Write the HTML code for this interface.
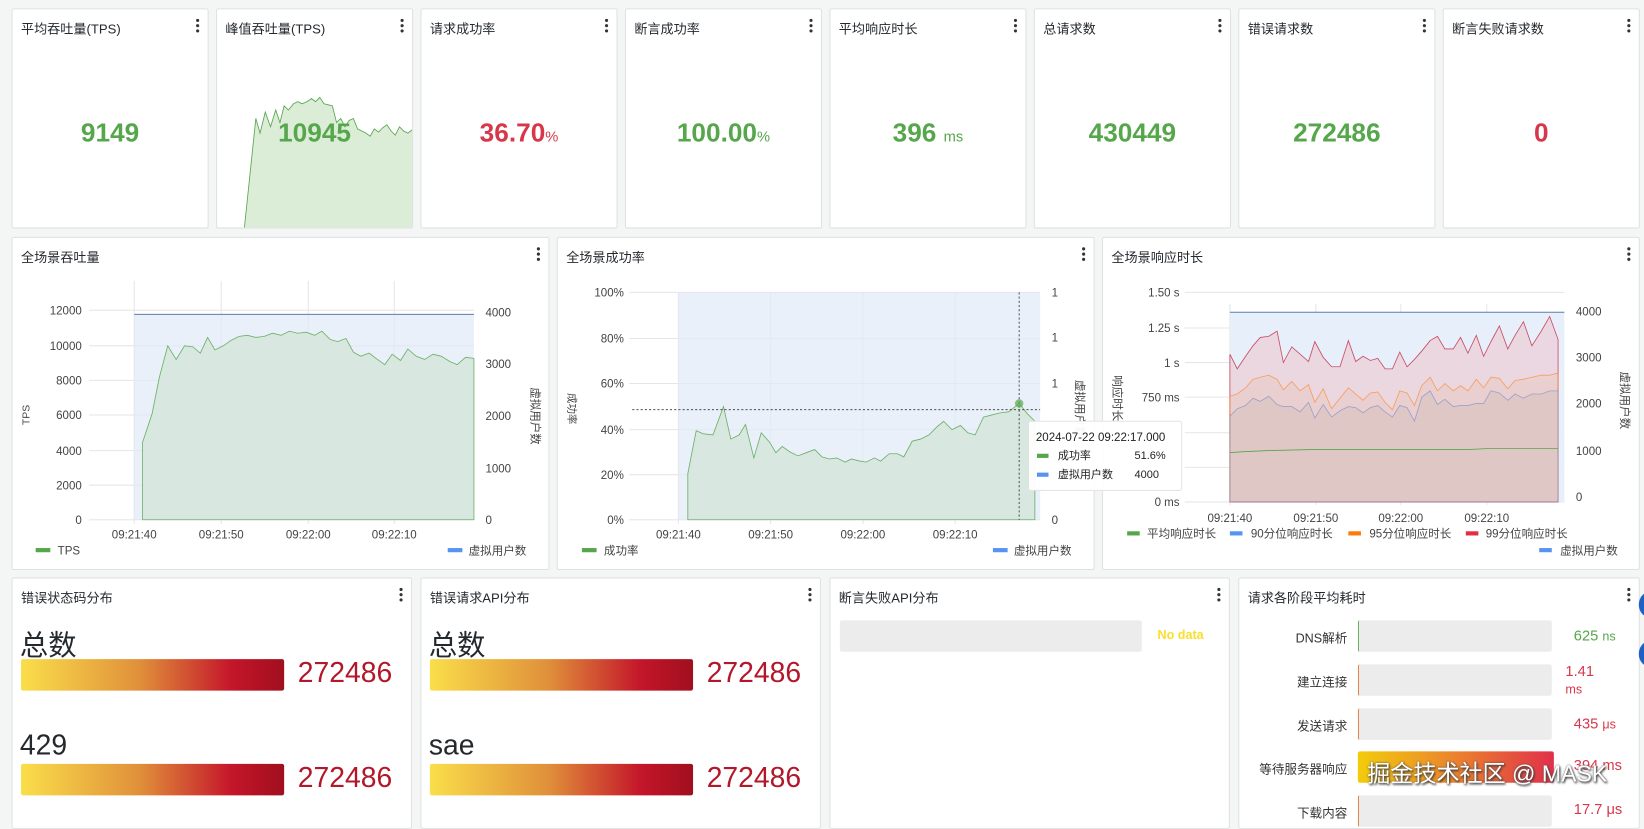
<!DOCTYPE html>
<html><head><meta charset="utf-8">
<style>
html,body{margin:0;padding:0;width:1644px;height:809px;overflow:hidden;background:#f4f5f5;}
#w{position:absolute;left:0;top:0;width:1568px;height:772px;transform:scale(1.0485,1.0479);transform-origin:0 0;font-family:"Liberation Sans","Noto Sans CJK SC",sans-serif;color:#24292e;}
.p{position:absolute;background:#fff;border:1px solid #dfe1e4;border-radius:2px;box-sizing:border-box;overflow:hidden;}
.t{position:absolute;left:8px;top:8px;font-size:12.5px;color:#24292e;}
.k{position:absolute;right:8px;top:9px;width:3px;}
.k i{display:block;width:3px;height:3px;border-radius:50%;background:#333;margin-bottom:2px;}
.big{position:absolute;left:0;right:0;top:104px;text-align:center;font-size:25px;font-weight:bold;}
.g{color:#56a64b}.r{color:#d8374a}
.big small{font-size:14px;font-weight:normal}
svg text{font-family:"Liberation Sans","Noto Sans CJK SC",sans-serif;}
.lab{position:absolute;font-size:12px;color:#333;text-align:right;width:100px;}
.bar{position:absolute;background:#ececec;border-radius:2px;}
.val{position:absolute;font-size:14px;}
.num{position:absolute;left:272px;font-size:27px;color:#b2172a}
</style></head><body><div id="w">
<!-- row 1 -->
<div class="p" style="left:11px;top:8px;width:188px;height:210px"><div class="t">平均吞吐量(TPS)</div><div class="k"><i></i><i></i><i></i></div><div class="big g">9149</div></div>
<div class="p" style="left:206px;top:8px;width:188px;height:210px">
<svg width="188" height="210" style="position:absolute;left:0;top:0"><path d="M26 209 L37 104 L41 118 L46 98 L51 112 L56 96 L60 108 L64 92 L68 96 L73 90 L77 88 L81 90 L86 88 L90 85 L94 88 L98 84 L102 90 L106 91 L110 92 L114 108 L118 104 L122 112 L126 106 L130 104 L134 114 L138 116 L142 118 L146 121 L150 114 L154 117 L158 113 L162 110 L166 116 L170 120 L174 112 L178 116 L182 118 L186 115 L188 115 L188 209Z" fill="#dbecd7" stroke="#56a64b" stroke-width="0.8"/></svg>
<div class="t">峰值吞吐量(TPS)</div><div class="k"><i></i><i></i><i></i></div><div class="big g">10945</div></div>
<div class="p" style="left:401px;top:8px;width:188px;height:210px"><div class="t">请求成功率</div><div class="k"><i></i><i></i><i></i></div><div class="big r">36.70<small>%</small></div></div>
<div class="p" style="left:596px;top:8px;width:188px;height:210px"><div class="t">断言成功率</div><div class="k"><i></i><i></i><i></i></div><div class="big g">100.00<small>%</small></div></div>
<div class="p" style="left:791px;top:8px;width:188px;height:210px"><div class="t">平均响应时长</div><div class="k"><i></i><i></i><i></i></div><div class="big g">396 <small>ms</small></div></div>
<div class="p" style="left:986px;top:8px;width:188px;height:210px"><div class="t">总请求数</div><div class="k"><i></i><i></i><i></i></div><div class="big g">430449</div></div>
<div class="p" style="left:1181px;top:8px;width:188px;height:210px"><div class="t">错误请求数</div><div class="k"><i></i><i></i><i></i></div><div class="big g">272486</div></div>
<div class="p" style="left:1376px;top:8px;width:188px;height:210px"><div class="t">断言失败请求数</div><div class="k"><i></i><i></i><i></i></div><div class="big r">0</div></div>

<!-- row 2 -->
<div class="p" style="left:11px;top:226px;width:513px;height:318px"><div class="t">全场景吞吐量</div><div class="k"><i></i><i></i><i></i></div></div>
<div class="p" style="left:531px;top:226px;width:513px;height:318px"><div class="t">全场景成功率</div><div class="k"><i></i><i></i><i></i></div></div>
<div class="p" style="left:1051px;top:226px;width:513px;height:318px"><div class="t">全场景响应时长</div><div class="k"><i></i><i></i><i></i></div></div>

<svg width="1568" height="560" style="position:absolute;left:0;top:0" font-size="11" fill="#444">
<!-- chart1 -->
<g stroke="#e6e6e6" stroke-width="1">
<line x1="85" y1="296" x2="452" y2="296"/><line x1="85" y1="330" x2="452" y2="330"/><line x1="85" y1="363" x2="452" y2="363"/><line x1="85" y1="396" x2="452" y2="396"/><line x1="85" y1="430" x2="452" y2="430"/><line x1="85" y1="463" x2="452" y2="463"/><line x1="85" y1="496" x2="452" y2="496"/>
<line x1="128" y1="268" x2="128" y2="500"/><line x1="211" y1="268" x2="211" y2="500"/><line x1="294" y1="268" x2="294" y2="500"/><line x1="376" y1="268" x2="376" y2="500"/>
</g>
<rect x="128" y="300" width="324" height="196" fill="#dfeaf8" opacity="0.7"/>
<line x1="128" y1="300" x2="452" y2="300" stroke="#5b7ea8" stroke-width="1"/>
<path d="M136 422 L145 395 L152 360 L160 330 L168 343 L176 330 L184 331 L191 337 L198 322 L205 334 L213 330 L220 325 L228 321 L236 320 L244 322 L252 321 L260 318 L268 320 L276 316 L284 318 L292 317 L300 320 L307 316 L315 324 L322 326 L330 323 L337 336 L344 340 L352 337 L360 343 L367 348 L374 338 L382 344 L389 333 L397 340 L405 343 L413 338 L421 340 L429 345 L436 348 L444 341 L452 342 L452 496 L136 496Z" fill="#d6e7dc" opacity="0.85" stroke="#56a64b" stroke-width="0.8"/>
<g text-anchor="end"><text x="78" y="300">12000</text><text x="78" y="334">10000</text><text x="78" y="367">8000</text><text x="78" y="400">6000</text><text x="78" y="434">4000</text><text x="78" y="467">2000</text><text x="78" y="500">0</text></g>
<text x="463" y="302">4000</text><text x="463" y="351">3000</text><text x="463" y="401">2000</text><text x="463" y="451">1000</text><text x="463" y="500">0</text>
<g text-anchor="middle"><text x="128" y="514">09:21:40</text><text x="211" y="514">09:21:50</text><text x="294" y="514">09:22:00</text><text x="376" y="514">09:22:10</text></g>
<text transform="translate(28,396) rotate(-90)" text-anchor="middle" font-size="10">TPS</text>
<text transform="translate(507,397) rotate(90)" text-anchor="middle" font-size="11">虚拟用户数</text>
<rect x="34" y="523" width="14" height="4" fill="#56a64b"/><text x="55" y="529">TPS</text>
<rect x="427" y="523" width="14" height="4" fill="#5794f2"/><text x="447" y="529">虚拟用户数</text>

<!-- chart2 -->
<g stroke="#e6e6e6"><line x1="600" y1="279" x2="992" y2="279"/><line x1="600" y1="323" x2="992" y2="323"/><line x1="600" y1="366" x2="992" y2="366"/><line x1="600" y1="410" x2="992" y2="410"/><line x1="600" y1="453" x2="992" y2="453"/><line x1="600" y1="496" x2="992" y2="496"/>
<line x1="647" y1="279" x2="647" y2="500"/><line x1="735" y1="279" x2="735" y2="500"/><line x1="823" y1="279" x2="823" y2="500"/><line x1="911" y1="279" x2="911" y2="500"/></g>
<rect x="647" y="279" width="345" height="217" fill="#dfeaf8" opacity="0.7"/>
<path d="M656 452 L664 411 L671 414 L680 415 L690 388 L697 419 L705 415 L711 405 L719 437 L726 413 L734 422 L740 432 L746 426 L753 431 L761 435 L769 432 L777 429 L784 436 L791 438 L798 437 L806 441 L812 438 L820 440 L826 441 L834 437 L840 440 L848 433 L856 433 L862 436 L870 421 L878 419 L886 415 L894 407 L900 402 L908 410 L916 406 L923 413 L930 415 L938 398 L946 396 L954 394 L962 393 L972 385 L980 395 L987 402 L987 496 L656 496Z" fill="#d6e7dc" opacity="0.85" stroke="#56a64b" stroke-width="0.8"/>
<line x1="972" y1="279" x2="972" y2="496" stroke="#333" stroke-dasharray="2,2" stroke-width="0.8"/>
<line x1="603" y1="391" x2="992" y2="391" stroke="#333" stroke-dasharray="2,2" stroke-width="0.8"/>
<circle cx="972" cy="385" r="4" fill="#56a64b" opacity="0.7"/>
<g text-anchor="end"><text x="595" y="283">100%</text><text x="595" y="327">80%</text><text x="595" y="370">60%</text><text x="595" y="414">40%</text><text x="595" y="457">20%</text><text x="595" y="500">0%</text></g>
<text x="1003" y="283">1</text><text x="1003" y="326">1</text><text x="1003" y="370">1</text><text x="1003" y="500">0</text>
<g text-anchor="middle"><text x="647" y="514">09:21:40</text><text x="735" y="514">09:21:50</text><text x="823" y="514">09:22:00</text><text x="911" y="514">09:22:10</text></g>
<text transform="translate(542,390) rotate(90)" text-anchor="middle" font-size="10">成功率</text>
<text transform="translate(1026,390) rotate(90)" text-anchor="middle" font-size="11">虚拟用户数</text>
<rect x="555" y="523" width="14" height="4" fill="#56a64b"/><text x="576" y="529">成功率</text>
<rect x="947" y="523" width="14" height="4" fill="#5794f2"/><text x="967" y="529">虚拟用户数</text>

<!-- chart3 -->
<g stroke="#e6e6e6"><line x1="1130" y1="279" x2="1492" y2="279"/><line x1="1130" y1="313" x2="1492" y2="313"/><line x1="1130" y1="346" x2="1492" y2="346"/><line x1="1130" y1="379" x2="1492" y2="379"/><line x1="1130" y1="413" x2="1492" y2="413"/><line x1="1130" y1="446" x2="1492" y2="446"/><line x1="1130" y1="479" x2="1492" y2="479"/>
<line x1="1173" y1="290" x2="1173" y2="482"/><line x1="1255" y1="290" x2="1255" y2="482"/><line x1="1336" y1="290" x2="1336" y2="482"/><line x1="1418" y1="290" x2="1418" y2="482"/></g>
<rect x="1173" y="298" width="319" height="181" fill="#e6effa"/>
<line x1="1173" y1="298" x2="1492" y2="298" stroke="#5b7ea8"/>
<path d="M1173 338 L1180 352 L1188 340 L1195 330 L1202 322 L1210 321 L1218 316 L1224 346 L1232 331 L1240 338 L1248 345 L1254 326 L1262 341 L1270 350 L1278 350 L1286 325 L1293 345 L1300 340 L1307 344 L1314 342 L1321 352 L1328 352 L1335 336 L1342 350 L1349 343 L1356 335 L1364 325 L1371 321 L1378 333 L1386 333 L1393 322 L1400 337 L1408 320 L1415 340 L1422 326 L1430 311 L1438 333 L1445 320 L1453 307 L1461 330 L1470 316 L1478 302 L1486 324 L1486 479 L1173 479Z" fill="#ecd3dc" opacity="0.85" stroke="#c4314b" stroke-width="0.8"/>
<path d="M1173 378 L1180 376 L1188 370 L1195 362 L1202 360 L1210 358 L1218 362 L1224 372 L1232 364 L1240 373 L1248 367 L1254 384 L1262 371 L1270 390 L1278 380 L1286 370 L1293 376 L1300 382 L1307 375 L1314 374 L1321 384 L1328 391 L1335 373 L1342 375 L1349 387 L1356 368 L1364 360 L1371 373 L1378 366 L1386 373 L1393 368 L1400 373 L1408 362 L1415 370 L1422 360 L1430 361 L1438 371 L1445 363 L1453 362 L1461 360 L1470 358 L1478 358 L1486 356 L1486 479 L1173 479Z" fill="#e9cbc4" opacity="0.6" stroke="#ff780a" stroke-width="0.8"/>
<path d="M1173 397 L1180 390 L1188 387 L1195 380 L1202 383 L1210 378 L1218 386 L1224 388 L1232 388 L1240 393 L1248 384 L1254 399 L1262 386 L1270 398 L1278 392 L1286 388 L1293 389 L1300 394 L1307 389 L1314 387 L1321 393 L1328 398 L1335 387 L1342 389 L1349 402 L1356 379 L1364 373 L1371 386 L1378 381 L1386 388 L1393 387 L1400 387 L1408 385 L1415 385 L1422 373 L1430 375 L1438 382 L1445 376 L1453 380 L1461 376 L1470 376 L1478 373 L1486 373 L1486 479 L1173 479Z" fill="#d9c2c0" opacity="0.6" stroke="#6c81c8" stroke-width="0.8"/>
<path d="M1173 432 L1186 431 L1210 430 L1250 429 L1300 429 L1340 429 L1400 429 L1420 428 L1486 428" fill="none" stroke="#56a64b" stroke-width="0.8"/>
<g text-anchor="end"><text x="1125" y="283">1.50 s</text><text x="1125" y="317">1.25 s</text><text x="1125" y="350">1 s</text><text x="1125" y="383">750 ms</text><text x="1125" y="483">0 ms</text></g>
<text x="1503" y="301">4000</text><text x="1503" y="345">3000</text><text x="1503" y="389">2000</text><text x="1503" y="434">1000</text><text x="1503" y="478">0</text>
<g text-anchor="middle"><text x="1173" y="498">09:21:40</text><text x="1255" y="498">09:21:50</text><text x="1336" y="498">09:22:00</text><text x="1418" y="498">09:22:10</text></g>
<text transform="translate(1062,380) rotate(90)" text-anchor="middle" font-size="11">响应时长</text>
<text transform="translate(1546,382) rotate(90)" text-anchor="middle" font-size="11">虚拟用户数</text>
<rect x="1075" y="507" width="12" height="4" fill="#56a64b"/><text x="1094" y="513">平均响应时长</text>
<rect x="1173" y="507" width="12" height="4" fill="#5794f2"/><text x="1193" y="513">90分位响应时长</text>
<rect x="1286" y="507" width="12" height="4" fill="#ff780a"/><text x="1306" y="513">95分位响应时长</text>
<rect x="1398" y="507" width="12" height="4" fill="#e02f44"/><text x="1417" y="513">99分位响应时长</text>
<rect x="1468" y="523" width="12" height="4" fill="#5794f2"/><text x="1488" y="529">虚拟用户数</text>

<!-- tooltip -->
<rect x="981" y="402" width="146" height="66" rx="2" fill="#fff" stroke="#e4e4e4" opacity="0.95"/>
<text x="988" y="421" font-size="11" fill="#222">2024-07-22 09:22:17.000</text>
<rect x="989" y="433" width="11" height="4" fill="#56a64b"/><text x="1009" y="438" font-size="10.5" fill="#222">成功率</text><text x="1082" y="438" font-size="10.5" fill="#222">51.6%</text>
<rect x="989" y="451" width="11" height="4" fill="#5794f2"/><text x="1009" y="456" font-size="10.5" fill="#222">虚拟用户数</text><text x="1082" y="456" font-size="10.5" fill="#222">4000</text>
</svg>

<!-- row 3 -->
<div class="p" style="left:11px;top:551px;width:382px;height:240px"><div class="t">错误状态码分布</div><div class="k"><i></i><i></i><i></i></div>
<div style="position:absolute;left:7px;top:42px;font-size:27px">总数</div>
<div style="position:absolute;left:8px;top:77px;width:251px;height:30px;background:linear-gradient(90deg,#fade4a,#e0903a 45%,#c4162a 80%,#a00f1e);border-radius:2px"></div>
<div class="num" style="top:75px">272486</div>
<div style="position:absolute;left:7px;top:144px;font-size:27px">429</div>
<div style="position:absolute;left:8px;top:177px;width:251px;height:30px;background:linear-gradient(90deg,#fade4a,#e0903a 45%,#c4162a 80%,#a00f1e);border-radius:2px"></div>
<div class="num" style="top:175px">272486</div>
</div>
<div class="p" style="left:401px;top:551px;width:382px;height:240px"><div class="t">错误请求API分布</div><div class="k"><i></i><i></i><i></i></div>
<div style="position:absolute;left:7px;top:42px;font-size:27px">总数</div>
<div style="position:absolute;left:8px;top:77px;width:251px;height:30px;background:linear-gradient(90deg,#fade4a,#e0903a 45%,#c4162a 80%,#a00f1e);border-radius:2px"></div>
<div class="num" style="top:75px">272486</div>
<div style="position:absolute;left:7px;top:144px;font-size:27px">sae</div>
<div style="position:absolute;left:8px;top:177px;width:251px;height:30px;background:linear-gradient(90deg,#fade4a,#e0903a 45%,#c4162a 80%,#a00f1e);border-radius:2px"></div>
<div class="num" style="top:175px">272486</div>
</div>
<div class="p" style="left:791px;top:551px;width:382px;height:240px"><div class="t">断言失败API分布</div><div class="k"><i></i><i></i><i></i></div>
<div class="bar" style="left:9px;top:40px;width:288px;height:30px"></div>
<div style="position:absolute;left:312px;top:47px;font-size:12px;font-weight:bold;color:#fade2a">No data</div>
</div>
<div class="p" style="left:1181px;top:551px;width:383px;height:240px"><div class="t">请求各阶段平均耗时</div><div class="k"><i></i><i></i><i></i></div>
<div class="lab" style="left:3px;top:48px">DNS解析</div><div class="bar" style="left:113px;top:40px;width:184px;height:30px;border-left:1px solid #56a64b"></div><div class="val" style="left:319px;top:46px;color:#56a64b">625 <span style="font-size:12px">ns</span></div>
<div class="lab" style="left:3px;top:90px">建立连接</div><div class="bar" style="left:113px;top:82px;width:184px;height:30px;border-left:1px solid #e0752d"></div><div class="val" style="left:311px;top:80px;color:#d8374a;line-height:17px">1.41<br><span style="font-size:12px">ms</span></div>
<div class="lab" style="left:3px;top:132px">发送请求</div><div class="bar" style="left:113px;top:124px;width:184px;height:30px;border-left:1px solid #e0752d"></div><div class="val" style="left:319px;top:130px;color:#d8374a">435 <span style="font-size:12px">μs</span></div>
<div class="lab" style="left:3px;top:173px">等待服务器响应</div><div class="bar" style="left:113px;top:165px;width:187px;height:30px;background:linear-gradient(90deg,#f2cc0c,#ec8a2a 45%,#e0304a)"></div><div class="val" style="left:319px;top:170px;color:#d8374a">394 ms</div>
<div class="lab" style="left:3px;top:215px">下载内容</div><div class="bar" style="left:113px;top:207px;width:184px;height:30px;border-left:1px solid #e0752d"></div><div class="val" style="left:319px;top:212px;color:#d8374a">17.7 μs</div>
<div style="position:absolute;left:122px;top:169px;font-size:22px;color:#fff;text-shadow:0 0 2px #555,1px 1px 2px #333;white-space:nowrap">掘金技术社区 @ MASK</div>
</div>
<div style="position:absolute;left:1563px;top:565px;width:20px;height:24px;border-radius:50%;background:#1f60c4"></div>
<div style="position:absolute;left:1563px;top:612px;width:20px;height:24px;border-radius:50%;background:#1f60c4"></div>
</div></body></html>
